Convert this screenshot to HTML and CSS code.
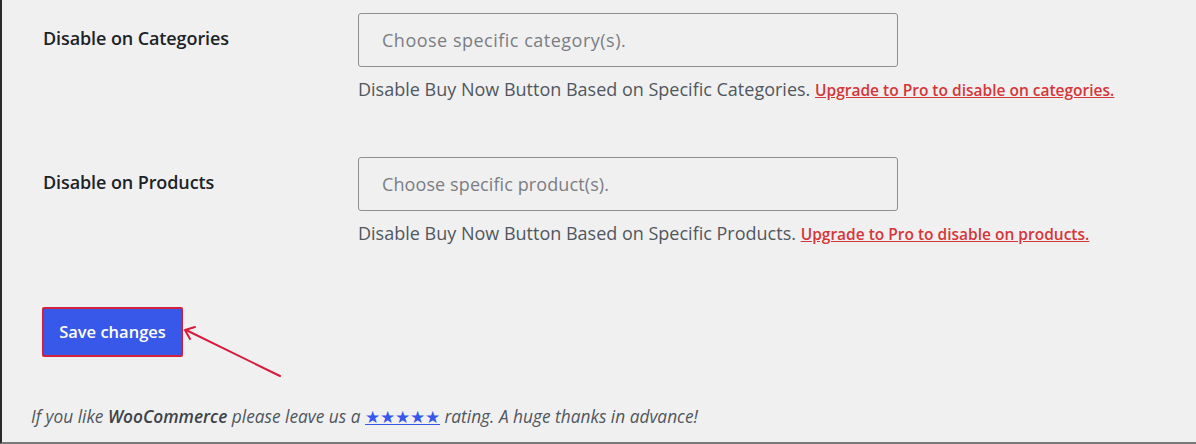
FILE: index.html
```html
<!DOCTYPE html>
<html lang="en">
<head>
<meta charset="utf-8">
<title>Buy Now Settings</title>
<link rel="stylesheet" href="styles.css">
</head>
<body>
<div class="page">
  <div class="form">
    <div class="row">
      <div class="label">Disable on Categories</div>
      <div class="field">
        <div class="select">Choose specific category(s).</div>
        <p class="desc">Disable Buy Now Button Based on Specific Categories. <a class="pro" href="#">Upgrade to Pro to disable on categories.</a></p>
      </div>
    </div>
    <div class="row row-tight">
      <div class="label">Disable on Products</div>
      <div class="field">
        <div class="select">Choose specific product(s).</div>
        <p class="desc">Disable Buy Now Button Based on Specific Products. <a class="pro" href="#">Upgrade to Pro to disable on products.</a></p>
      </div>
    </div>
  </div>
  <div class="actions">
    <button class="save" type="button">Save changes</button>
    <svg class="arrow" width="110" height="60" viewBox="0 0 110 60">
      <path d="M104 55 L10 9" stroke="#d81b3c" stroke-width="2" fill="none" stroke-linecap="round"/>
      <path d="M19 6 L9 9 L14 18" stroke="#d81b3c" stroke-width="2" fill="none" stroke-linecap="round" stroke-linejoin="round"/>
    </svg>
  </div>
  <p class="footer">If you like <strong>WooCommerce</strong> please leave us a <a class="stars" href="#">★★★★★</a> rating. A huge thanks in advance!</p>
</div>
</body>
</html>
```
FILE: styles.css
```css
html, body {
  margin: 0;
  padding: 0;
  background: #f0f0f1;
}
.page {
  box-sizing: border-box;
  height: 444px;
  border-left: 2px solid #2a2a2a;
  border-bottom: 2px solid #7a7a7a;
  background: #f0f0f1;
  font-family: "Open Sans", "Noto Sans", sans-serif;
  color: #50575e;
  position: relative;
  overflow: hidden;
}
.form {
  padding-top: 13px;
}
.row {
  display: grid;
  grid-template-columns: 315px 540px;
  padding-left: 41px;
  height: 144px;
}
.label {
  font-size: 18px;
  font-weight: 600;
  color: #1d2327;
  padding-top: 13px;
  letter-spacing: -0.1px;
}
.select {
  box-sizing: border-box;
  height: 54px;
  border: 1px solid #8c8f94;
  border-radius: 3px;
  padding: 0 23px;
  display: flex;
  align-items: center;
  font-size: 18px;
  color: #7b7e83;
  letter-spacing: 0.5px;
}
.desc {
  margin: 10px 0 0;
  font-size: 18px;
  white-space: nowrap;
}
.row-tight .select {
  letter-spacing: 0.1px;
}
.pro {
  color: #d63638;
  font-size: 15.5px;
  font-weight: 600;
  text-decoration: underline;
}
.actions {
  position: relative;
  padding-left: 40px;
  margin-top: 6px;
  height: 50px;
}
.save {
  box-sizing: border-box;
  width: 141px;
  height: 50px;
  background: #3858e9;
  border: 2px solid #d0213f;
  border-radius: 2px;
  color: #fff;
  font-family: "Open Sans", "Noto Sans", sans-serif;
  font-size: 16.5px;
  font-weight: 600;
  padding: 0 0 2px;
}
.arrow {
  position: absolute;
  left: 174px;
  top: 14px;
}
.footer {
  margin: 48px 0 0 29px;
  font-size: 17.3px;
  font-style: italic;
  color: #50575e;
}
.footer strong {
  font-weight: 600;
  color: #3c434a;
}
.stars {
  color: #3858e9;
  text-decoration: underline;
  font-style: normal;
  font-size: 17px;
}
```
